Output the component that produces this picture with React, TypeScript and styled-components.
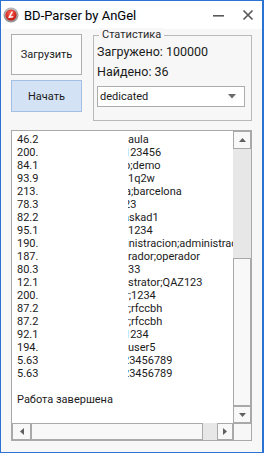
import styled, { createGlobalStyle } from 'styled-components';

const GlobalStyle = createGlobalStyle`
  html, body {
    margin: 0;
    padding: 0;
    background: #ffffff;
  }
  * {
    box-sizing: border-box;
  }
`;

const uiFont = `"Segoe UI", Roboto, "Noto Sans", sans-serif`;

const Window = styled.div`
  width: 264px;
  height: 453px;
  border: 1px solid #2b73d2;
  border-right-width: 2px;
  background: #f7f7f7;
  display: flex;
  flex-direction: column;
  font-family: ${uiFont};
  font-size: 11px;
  color: #1b1b1b;
  overflow: hidden;
`;

const TitleBar = styled.div`
  height: 28px;
  background: #ffffff;
  display: flex;
  align-items: center;
  padding: 0 0 0 2px;
`;

const AppIcon = styled.svg`
  width: 16px;
  height: 16px;
  flex: none;
  margin-right: 5px;
`;

const Title = styled.div`
  flex: 1;
  font-size: 13px;
  color: #000;
  text-shadow: 0 0 6px #d8e6ff;
`;

const Caption = styled.svg`
  width: 28px;
  height: 20px;
  flex: none;
`;

const Client = styled.div`
  flex: 1;
  display: flex;
  flex-direction: column;
  padding: 5px 10px 11px 10px;
`;

const TopRow = styled.div`
  display: flex;
  align-items: flex-start;
  gap: 11px;
`;

const ButtonColumn = styled.div`
  display: flex;
  flex-direction: column;
  gap: 5px;
`;

const Button = styled.button<{ $height: number; $primary?: boolean }>`
  width: 71px;
  height: ${p => p.$height}px;
  font-family: ${uiFont};
  font-size: 11px;
  color: #1b1b1b;
  padding: 0;
  border: 1px solid ${p => (p.$primary ? '#a3bfe4' : '#adadad')};
  background: ${p => (p.$primary ? '#d4e2f5' : '#fcfcfc')};
`;

const GroupBox = styled.div`
  position: relative;
  margin-top: 1px;
  width: 159px;
  height: 86px;
  border: 1px solid #b9b9b9;
  padding: 6px 0 0 3px;
`;

const Legend = styled.span`
  position: absolute;
  top: -8px;
  left: 5px;
  padding: 0 3px;
  background: #f7f7f7;
  line-height: 14px;
  color: #2a2a2a;
`;

const StatLine = styled.div`
  font-size: 12.5px;
  line-height: 20px;
  height: 20px;
`;

const Combo = styled.div`
  margin-top: 4px;
  width: 148px;
  height: 21px;
  border: 1px solid #acacac;
  background: #ffffff;
  display: flex;
  align-items: center;
  justify-content: space-between;
  padding: 0 8px 0 2px;
`;

const Arrow = styled.svg`
  width: 8px;
  height: 5px;
  flex: none;
`;

const ListBox = styled.div`
  margin-top: 9px;
  width: 241px;
  flex: 1;
  border: 1px solid #a9a9a9;
  background: #ffffff;
  display: grid;
  grid-template-columns: 1fr 18px;
  grid-template-rows: 1fr 17px;
  min-height: 0;
`;

const ListContent = styled.div`
  padding: 2px 0 0 5px;
  overflow: hidden;
  min-width: 0;
`;

const Row = styled.div`
  display: grid;
  grid-template-columns: 111px 1fr;
  height: 13px;
  line-height: 13px;
  white-space: nowrap;
`;

const Cell = styled.span`
  overflow: hidden;
  min-width: 0;
`;

const Clipped = styled.span<{ $cut: number }>`
  display: inline-block;
  margin-left: -${p => p.$cut}px;
`;

const VScroll = styled.div`
  display: flex;
  flex-direction: column;
  background: #e7e7e7;
`;

const HScroll = styled.div`
  display: flex;
  background: #e7e7e7;
`;

const ScrollButton = styled.div<{ $w: number; $h: number }>`
  width: ${p => p.$w}px;
  height: ${p => p.$h}px;
  flex: none;
  border: 1px solid #a9a9a9;
  background: #f8f8f8;
  display: flex;
  align-items: center;
  justify-content: center;
`;

const Track = styled.div`
  flex: 1;
`;

const Thumb = styled.div<{ $w?: number; $h?: number }>`
  flex: none;
  width: ${p => (p.$w ? `${p.$w}px` : 'auto')};
  height: ${p => (p.$h ? `${p.$h}px` : 'auto')};
  border: 1px solid #a9a9a9;
  background: #f8f8f8;
`;

const Corner = styled.div`
  background: #f7f7f7;
  border-top: 1px solid #a9a9a9;
  border-left: 1px solid #a9a9a9;
`;

type Entry = { ip: string; rest: string; cut?: number };

const entries: Entry[] = [
  { ip: '46.2', rest: 'aula' },
  { ip: '200.', rest: '123456', cut: 4 },
  { ip: '84.1', rest: 'o;demo', cut: 4 },
  { ip: '93.9', rest: '1q2w' },
  { ip: '213.', rest: 'a;barcelona', cut: 3 },
  { ip: '78.3', rest: '23', cut: 4 },
  { ip: '82.2', rest: 'askad1', cut: 5 },
  { ip: '95.1', rest: ' 1234' },
  { ip: '190.', rest: 'inistracion;administracion', cut: 2 },
  { ip: '187.', rest: 'rador;operador' },
  { ip: '80.3', rest: '33' },
  { ip: '12.1', rest: 'strator;QAZ123' },
  { ip: '200.', rest: 'r;1234', cut: 3 },
  { ip: '87.2', rest: 'r;rfccbh', cut: 3 },
  { ip: '87.2', rest: 'r;rfccbh', cut: 3 },
  { ip: '92.1', rest: '1234', cut: 4 },
  { ip: '194.', rest: ' user5' },
  { ip: '5.63', rest: '23456789', cut: 5 },
  { ip: '5.63', rest: '23456789', cut: 5 },
];

const Tri = ({ dir }: { dir: 'up' | 'down' | 'left' | 'right' }) => {
  const pts = {
    up: '0,4 7,4 3.5,0',
    down: '0,0 7,0 3.5,4',
    left: '4,0 4,7 0,3.5',
    right: '0,0 0,7 4,3.5',
  }[dir];
  const vertical = dir === 'up' || dir === 'down';
  return (
    <svg width={vertical ? 7 : 4} height={vertical ? 4 : 7} viewBox={vertical ? '0 0 7 4' : '0 0 4 7'}>
      <polygon points={pts} fill="#606060" />
    </svg>
  );
};

const App = () => {
  return (
    <>
      <GlobalStyle />
      <Window>
        <TitleBar>
          <AppIcon viewBox="0 0 16 16">
            <defs>
              <radialGradient id="ring" cx="50%" cy="40%" r="60%">
                <stop offset="0%" stopColor="#f4f4f4" />
                <stop offset="100%" stopColor="#8a8a8a" />
              </radialGradient>
              <radialGradient id="core" cx="45%" cy="35%" r="65%">
                <stop offset="0%" stopColor="#ff6a5a" />
                <stop offset="100%" stopColor="#c1120c" />
              </radialGradient>
            </defs>
            <circle cx="8" cy="8" r="7.5" fill="url(#ring)" />
            <circle cx="8" cy="8" r="5.6" fill="url(#core)" />
            <path d="M5 11 L8.6 4.6 L10.2 4.6 L7.6 9.2 L10.6 9.2 L10 10.6 Z" fill="#ffffff" />
          </AppIcon>
          <Title>BD-Parser by AnGel</Title>
          <Caption viewBox="0 0 28 20">
            <rect x="7" y="10" width="11" height="1.6" fill="#5a5a5a" />
          </Caption>
          <Caption viewBox="0 0 28 20">
            <path d="M9.5 5.5 L18.5 14.5 M18.5 5.5 L9.5 14.5" stroke="#5a5a5a" strokeWidth="1.7" />
          </Caption>
        </TitleBar>
        <Client>
          <TopRow>
            <ButtonColumn>
              <Button $height={41}>Загрузить</Button>
              <Button $height={32} $primary>Начать</Button>
            </ButtonColumn>
            <GroupBox>
              <Legend>Статистика</Legend>
              <StatLine>Загружено: 100000</StatLine>
              <StatLine>Найдено: 36</StatLine>
              <Combo>
                <span>dedicated</span>
                <Arrow viewBox="0 0 8 5">
                  <polygon points="0,0 8,0 4,4.5" fill="#6a6a6a" />
                </Arrow>
              </Combo>
            </GroupBox>
          </TopRow>
          <ListBox>
            <ListContent>
              {entries.map((e, i) => (
                <Row key={i}>
                  <Cell>{e.ip}</Cell>
                  <Cell>
                    <Clipped $cut={e.cut ?? 0}>{e.rest}</Clipped>
                  </Cell>
                </Row>
              ))}
              <Row />
              <Row>
                <Cell>Работа завершена</Cell>
              </Row>
            </ListContent>
            <VScroll>
              <ScrollButton $w={18} $h={18}>
                <Tri dir="up" />
              </ScrollButton>
              <Track />
              <Thumb $h={148} />
              <ScrollButton $w={18} $h={17}>
                <Tri dir="down" />
              </ScrollButton>
            </VScroll>
            <HScroll>
              <ScrollButton $w={19} $h={17}>
                <Tri dir="left" />
              </ScrollButton>
              <Thumb $w={172} />
              <Track />
              <ScrollButton $w={16} $h={17}>
                <Tri dir="right" />
              </ScrollButton>
            </HScroll>
            <Corner />
          </ListBox>
        </Client>
      </Window>
    </>
  );
};

export default App;
